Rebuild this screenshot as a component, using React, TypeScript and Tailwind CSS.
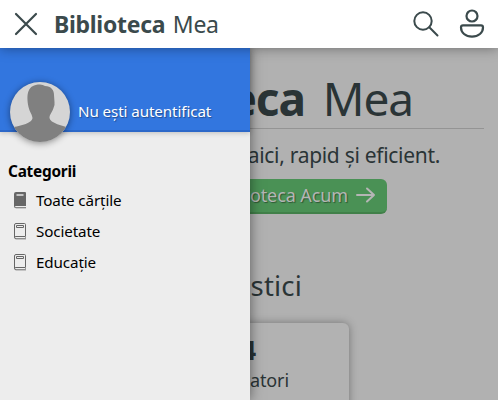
import React from "react";

type Category = { label: string; filled?: boolean };

const categories: Category[] = [
  { label: "Toate cărțile", filled: true },
  { label: "Societate" },
  { label: "Educație" },
];

function BookIcon({ filled }: { filled?: boolean }) {
  return (
    <svg width="12" height="17" viewBox="0 0 12 17" fill="none" stroke="#666" className="shrink-0">
      {filled ? (
        <>
          <path d="M2 0H11Q12 0 12 1V14H2Q1 14 1 14.7T2 15.3H12V16.3H2Q0 16.3 0 14V2Q0 0 2 0Z" fill="#666" stroke="none" />
          <path d="M2.5 3H9.5" stroke="#ededed" strokeWidth="1.4" />
        </>
      ) : (
        <>
          <path d="M.5 14.5V2Q.5.5 2 .5H10.5Q11.5.5 11.5 1.5V13.5H2Q.5 13.7.5 14.7T2 15.8H12" />
          <path d="M11.5 13.5V15.5" stroke="#999" />
          <path d="M2.5 2.5H9.5V4.5H2.5Z" />
        </>
      )}
    </svg>
  );
}

function Header() {
  return (
    <header className="relative z-30 flex h-12 items-center bg-white pl-[14px] pr-[13px] text-[#3b4a4c] shadow-[0_0_12px_rgba(0,0,0,0.4)]">
      <svg width="24" height="24" viewBox="0 0 24 24" fill="none" stroke="currentColor" strokeWidth="2.2" strokeLinecap="round">
        <path d="M2 2L22 22M22 2L2 22" />
      </svg>
      <div className="ml-4 whitespace-nowrap text-[23px] leading-[48px] tracking-[-0.3px]">
        <b className="mr-[2px]">Biblioteca</b> Mea
      </div>
      <svg className="ml-auto" width="26" height="26" viewBox="0 0 26 26" fill="none" stroke="currentColor" strokeWidth="2" strokeLinecap="round">
        <circle cx="10" cy="10" r="8.7" />
        <path d="M16.3 16.3L24.5 24.5" />
      </svg>
      <svg className="ml-[20px] mt-[-2px]" width="26" height="30" viewBox="0 0 26 30" fill="none" stroke="currentColor" strokeWidth="2.2">
        <circle cx="13" cy="8" r="5.5" />
        <path d="M4 17.3H22Q24 17.3 24 19.5C24 24.5 19.5 28.7 13 28.7S2 24.5 2 19.5Q2 17.3 4 17.3Z" />
      </svg>
    </header>
  );
}

function Drawer() {
  return (
    <aside className="absolute left-0 top-12 z-20 h-[352px] w-[250px] bg-[#ededed] text-black shadow-[0_0_12px_rgba(0,0,0,0.5)]">
      <div className="flex h-[84px] items-start border-b-2 border-[#2c68c9] bg-[#3276df] pl-[10px] pt-[34px] shadow-[0_1px_5px_rgba(0,0,0,0.2)]">
        <svg width="60" height="60" viewBox="0 0 60 60" className="shrink-0 rounded-full bg-[#d5d5d5] shadow-[0_1px_7px_rgba(0,0,0,0.45)]">
          <path d="M0 46C8 44 22 42 22.5 36C22 32 20 31 18.5 25C16 12 17.5 2.5 30 2.5Q33 2.5 35 4C41 4 44 8 44 13L44.5 20Q45 23 43.5 26C42 31 39.5 32 39.5 36C40 41 53 44 60 46V60H0Z" fill="#808080" />
        </svg>
        <span className="ml-2 mt-[17px] whitespace-nowrap text-[15.2px] leading-6 tracking-[-0.1px] text-white [text-shadow:1px_1px_1px_rgba(0,0,0,0.35)]">
          Nu ești autentificat
        </span>
      </div>
      <h2 className="ml-2 mt-[28px] text-[15.4px] font-bold leading-6 tracking-[-0.25px]">Categorii</h2>
      <ul className="mt-px">
        {categories.map((c) => (
          <li key={c.label} className="flex h-[31px] items-center gap-[10px] pl-[14px] text-[15.2px] tracking-[-0.12px]">
            <BookIcon filled={c.filled} />
            <span>{c.label}</span>
          </li>
        ))}
      </ul>
    </aside>
  );
}

function Home() {
  return (
    <main className="flex h-[352px] flex-col overflow-hidden bg-[#b1b1b1] px-[14px] text-[#2a3436]">
      <h1 className="mt-5 h-[61px] whitespace-nowrap border-b border-[#949494] pr-[71px] text-right text-[46px] leading-[61px] tracking-[-1.1px]">
        <b className="mr-[7px]">Biblioteca</b> Mea
      </h1>
      <p className="mt-[10px] whitespace-nowrap pr-[44px] text-right text-[21px] leading-8 tracking-[-0.3px]">
        Citește cărți de aici, rapid și eficient.
      </p>
      <div className="mt-[8px] flex h-[35px] w-[276px] shrink-0 items-center justify-end gap-2 self-center rounded-md border-b-2 border-[#418049] bg-[#4a9155] pr-[11px] text-[18px] text-[#b5b5b5]">
        <span className="whitespace-nowrap tracking-[-0.1px] [text-shadow:1px_1px_1px_rgba(0,0,0,0.4)]">Accesează Biblioteca Acum</span>
        <svg className="mt-[-2px]" width="20" height="18" viewBox="0 0 20 18" fill="none" stroke="currentColor" strokeWidth="2" strokeLinecap="round" strokeLinejoin="round">
          <path d="M1 9H18M11 2.5L18 9L11 15.5" />
        </svg>
      </div>
      <h2 className="mt-[51px] pr-[182px] text-right text-[27.5px] leading-[42px] tracking-[0.2px]">Statistici</h2>
      <section className="mt-[16px] flex h-[110px] w-[200px] shrink-0 flex-col items-end self-center rounded-md bg-[#b2b2b2] shadow-[0_0_8px_rgba(0,0,0,0.35)]">
        <b className="mr-[93px] mt-[10px] text-[26px] leading-[34px]">4</b>
        <span className="mr-[60px] mt-px text-[18px] leading-6 tracking-[-0.1px]">Vizitatori</span>
      </section>
    </main>
  );
}

export default function App() {
  return (
    <div className="relative h-[400px] w-[498px] overflow-hidden font-['Noto_Sans',sans-serif]">
      <Header />
      <Home />
      <Drawer />
    </div>
  );
}
